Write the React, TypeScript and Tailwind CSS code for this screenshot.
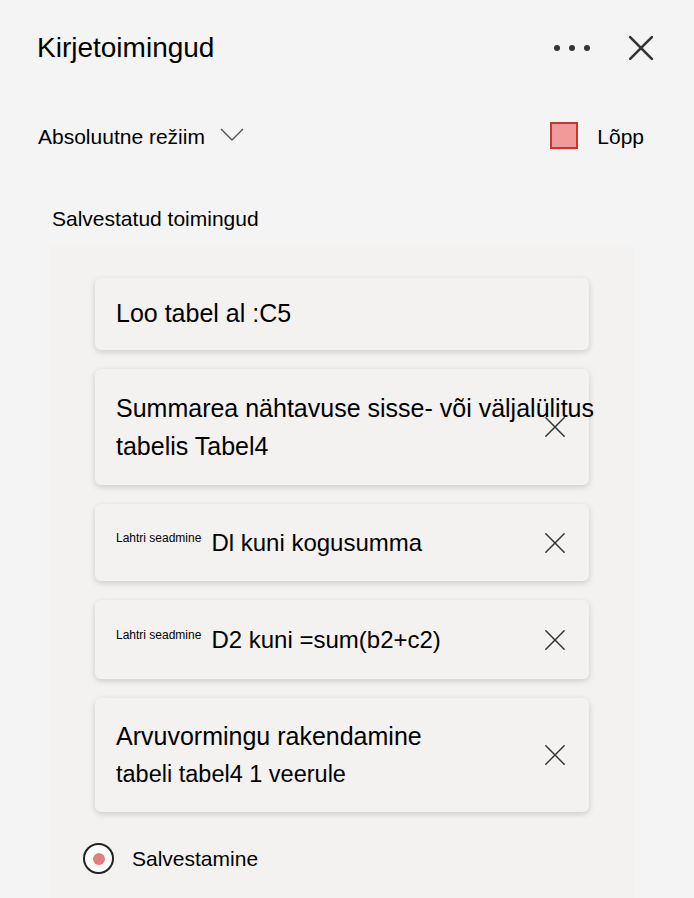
import { ReactNode } from 'react';

interface Action {
  id: number;
  height: string;
  removable: boolean;
  content: ReactNode;
}

function CloseIcon({ size, stroke }: { size: number; stroke: number }) {
  return (
    <svg width={size} height={size} viewBox="0 0 24 24" fill="none">
      <path d="M2 2L22 22M22 2L2 22" stroke="#333" strokeWidth={stroke} strokeLinecap="round" />
    </svg>
  );
}

function CellLabel({ text }: { text: string }) {
  return (
    <span className="whitespace-nowrap text-[24px]">
      <span className="text-[12px] align-[9px] mr-[10px]">Lahtri seadmine</span>
      {text}
    </span>
  );
}

const actions: Action[] = [
  { id: 1, height: 'h-[72px]', removable: false, content: <span>Loo tabel al :C5</span> },
  {
    id: 2,
    height: 'h-[116px]',
    removable: true,
    content: (
      <div className="leading-[38px]">
        <div className="whitespace-nowrap">Summarea nähtavuse sisse- või väljalülitus</div>
        <div>tabelis Tabel4</div>
      </div>
    ),
  },
  { id: 3, height: 'h-[77px]', removable: true, content: <CellLabel text="Dl kuni kogusumma" /> },
  { id: 4, height: 'h-[79px]', removable: true, content: <CellLabel text="D2 kuni =sum(b2+c2)" /> },
  {
    id: 5,
    height: 'h-[114px]',
    removable: true,
    content: (
      <div className="leading-[38px]">
        <div>Arvuvormingu rakendamine</div>
        <div className="text-[23.5px]">tabeli tabel4 1 veerule</div>
      </div>
    ),
  },
];

export default function App() {
  return (
    <div
      className="w-[694px] h-[898px] overflow-hidden bg-[#f4f4f4] text-black"
      style={{ fontFamily: '"Liberation Sans", Arial, sans-serif' }}
    >
      {/* Header */}
      <div className="flex items-center h-[34px] mt-[31px] pl-[37px] pr-[40px]">
        <h1 className="text-[28px] flex-1">Kirjetoimingud</h1>
        <div className="flex items-center gap-[9px] mr-[38px]">
          <span className="w-[6px] h-[6px] rounded-full bg-[#333]" />
          <span className="w-[6px] h-[6px] rounded-full bg-[#333]" />
          <span className="w-[6px] h-[6px] rounded-full bg-[#333]" />
        </div>
        <CloseIcon size={26} stroke={2.4} />
      </div>

      {/* Mode + stop */}
      <div className="flex items-center h-[30px] mt-[57px] pl-[38px] pr-[50px]">
        <span className="text-[21px]">Absoluutne režiim</span>
        <svg width="24" height="13" viewBox="0 0 24 13" fill="none" className="ml-[15px] -mt-[6px]">
          <path d="M1 1L12 12L23 1" stroke="#555" strokeWidth="1.4" />
        </svg>
        <div className="flex-1" />
        <span className="w-[28px] h-[27px] bg-[#f1999b] border-2 border-[#c8372d] -mt-[4px]" />
        <span className="text-[21px] ml-[19px]">Lõpp</span>
      </div>

      <div className="text-[21px] pl-[52px] mt-[55px] leading-[24px]">Salvestatud toimingud</div>

      {/* Saved actions */}
      <div className="ml-[50px] w-[583px] mt-[14px] h-[700px] bg-[#f3f2f1] pt-[33px]">
        <div className="flex flex-col gap-[19px] pl-[45px]">
          {actions.map((a) => (
            <div
              key={a.id}
              className={`relative w-[494px] ${a.height} flex items-center pl-[21px] rounded-[6px] bg-[#f3f2f1] shadow-[0_2px_6px_rgba(0,0,0,0.16)] text-[25px]`}
            >
              {a.content}
              {a.removable && (
                <button className="absolute right-[23px] top-1/2 -translate-y-1/2">
                  <CloseIcon size={22} stroke={1.6} />
                </button>
              )}
            </div>
          ))}
        </div>

        <div className="flex items-center mt-[31px] pl-[33px]">
          <span className="w-[31px] h-[31px] rounded-full border-[2.5px] border-[#222] bg-white flex items-center justify-center">
            <span className="w-[12px] h-[12px] rounded-full bg-[#e57f7f]" />
          </span>
          <span className="text-[21px] ml-[18px]">Salvestamine</span>
        </div>
      </div>
    </div>
  );
}
